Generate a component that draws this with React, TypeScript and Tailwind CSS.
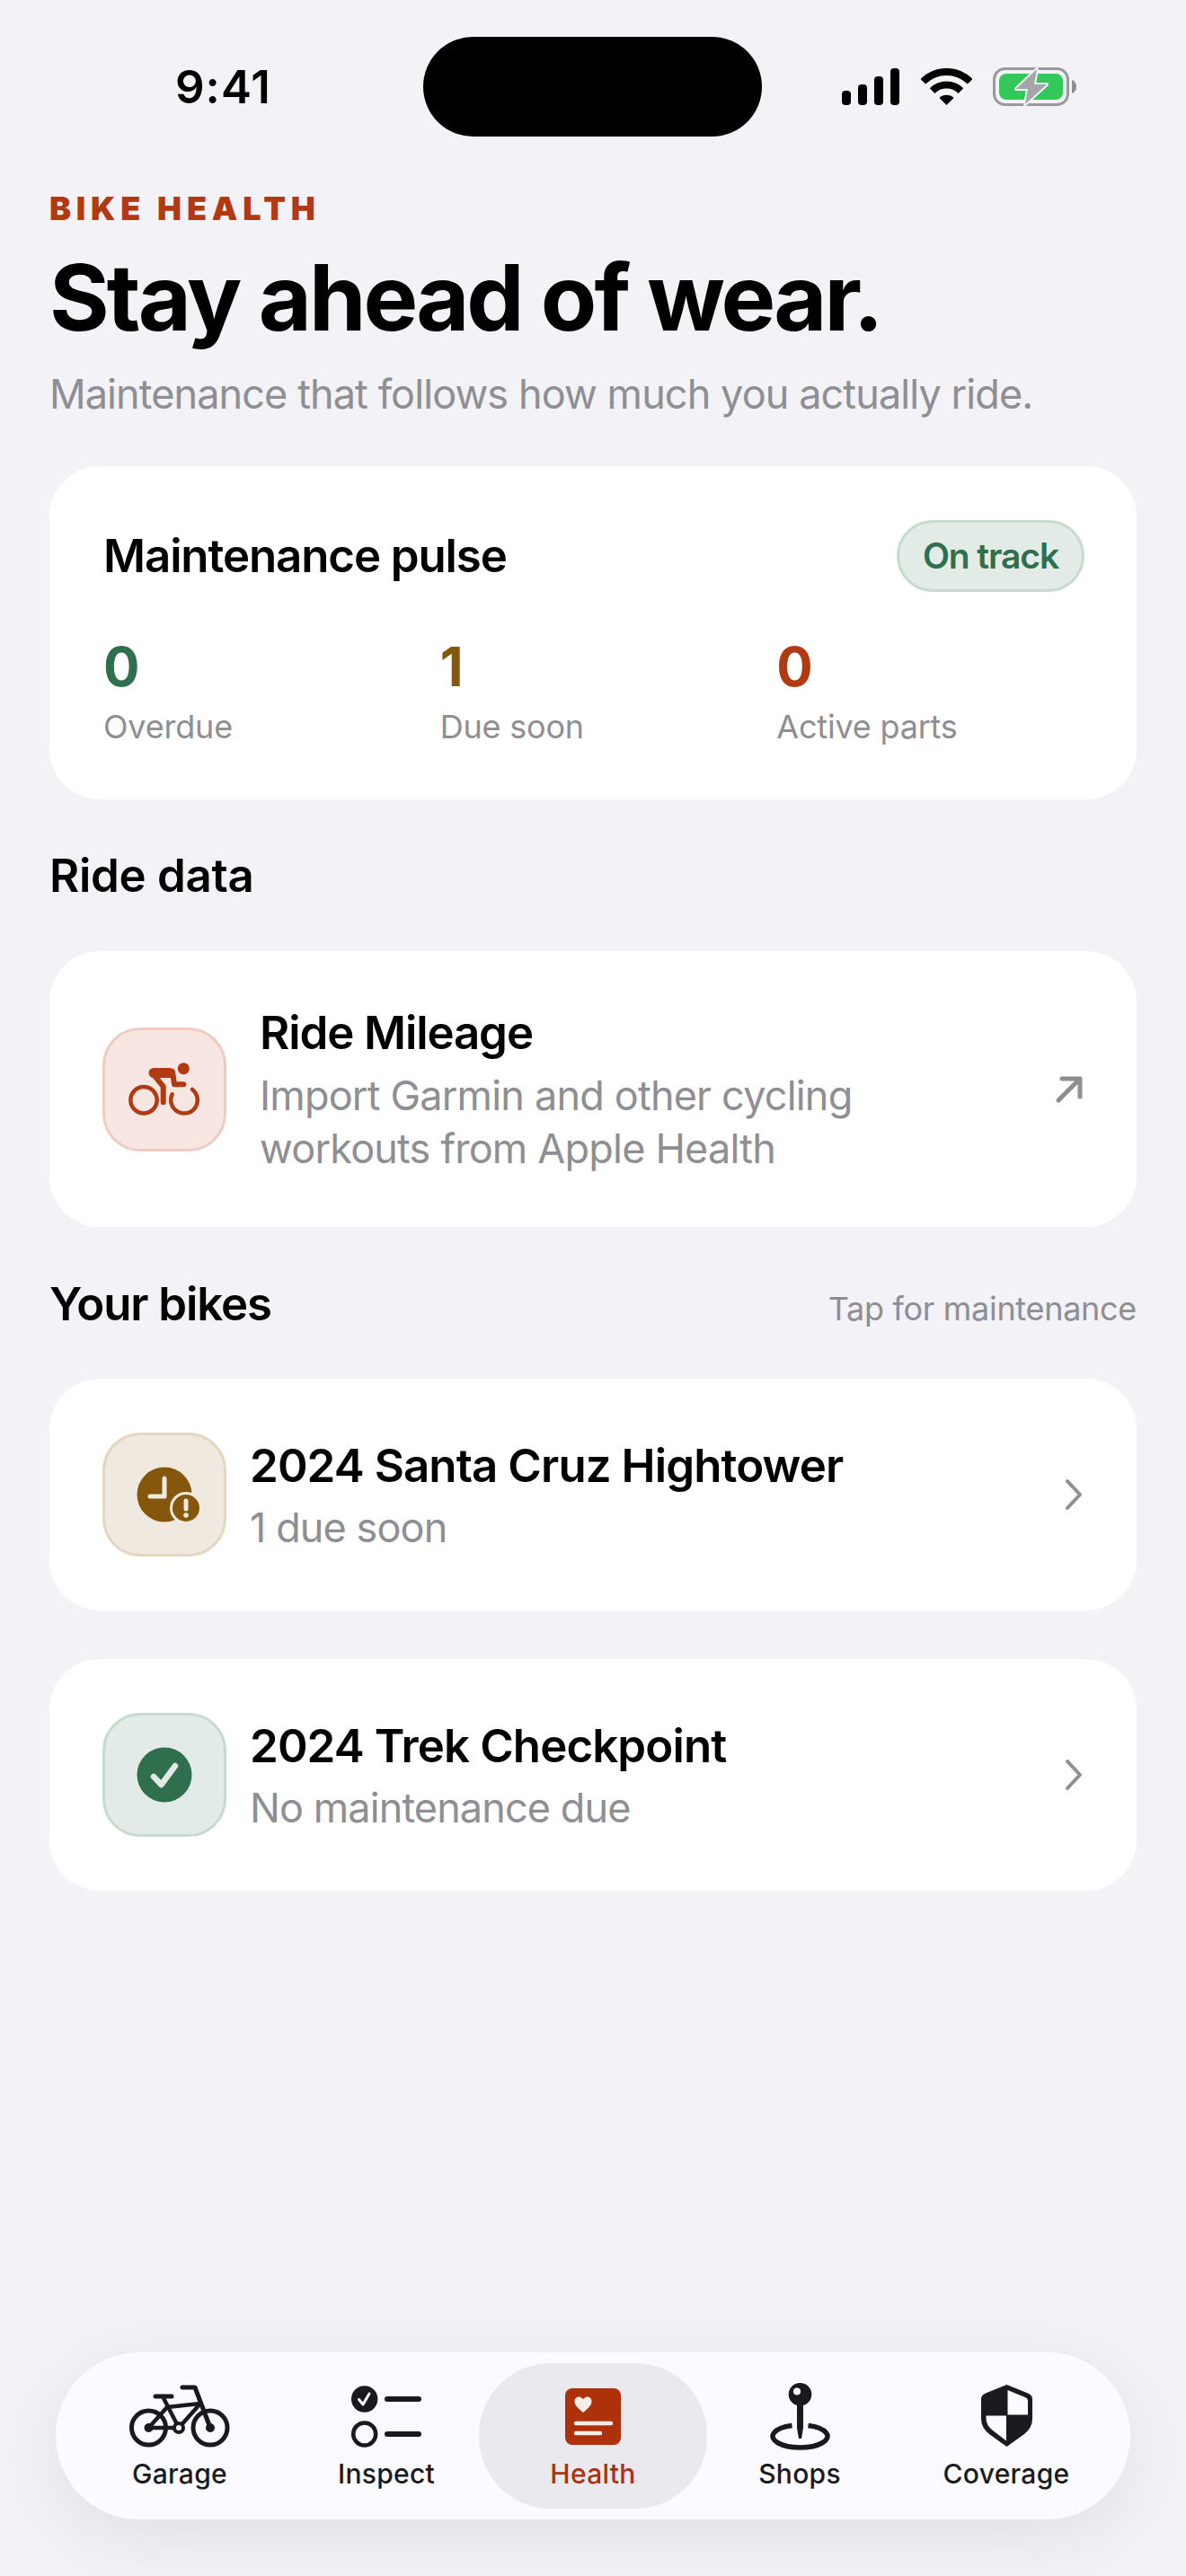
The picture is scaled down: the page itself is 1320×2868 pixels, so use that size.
import React from 'react';

const RED = '#b23a12';
const INK = '#1a1a1e';

const StatusIcons = () => (
  <div className="flex items-center gap-[23px]">
    <svg width="65" height="41" viewBox="0 0 65 41" fill="#000">
      <rect x="0" y="25" width="10" height="16" rx="4" />
      <rect x="18" y="18" width="10" height="23" rx="4" />
      <rect x="36" y="9" width="10" height="32" rx="4" />
      <rect x="54" y="0" width="10" height="41" rx="4" />
    </svg>
    <svg width="57" height="42" viewBox="0 0 57 42" fill="none" stroke="#000" strokeWidth="8">
      <path d="M2.3 14.8A37 37 0 0 1 54.7 14.8" />
      <path d="M12.6 25.1A22.5 22.5 0 0 1 44.4 25.1" />
      <path d="M28.5 41L20.5 33A11.5 11.5 0 0 1 36.5 33Z" fill="#000" stroke="none" />
    </svg>
    <svg width="93" height="43" viewBox="0 0 93 43" fill="none">
      <rect x="1.5" y="1.5" width="82" height="40" rx="12" stroke="#9a9a9d" strokeWidth="3" />
      <rect x="7" y="7" width="71" height="29" rx="8" fill="#34c759" />
      <path d="M88 14c3 1 5 4 5 7.500s-2 6.500-5 7.500Z" fill="#8e8e91" />
      <path
        d="M49 2L26 24H39L36 41L60 19H46Z"
        fill="#a5a5a8"
        stroke="#f2f2f7"
        strokeWidth="4"
        strokeLinejoin="round"
        paintOrder="stroke"
      />
    </svg>
  </div>
);

const Rider = () => (
  <svg width="80" height="60" viewBox="0 0 80 60" fill="none" stroke={RED} strokeLinecap="round" strokeLinejoin="round">
    <circle cx="61.300" cy="6.700" r="6.500" fill={RED} stroke="none" />
    <circle cx="17" cy="41.700" r="14.700" strokeWidth="4.500" />
    <path d="M48.700 35.300A14.800 14.800 0 1 0 71 30" strokeWidth="4.500" />
    <path d="M28 11.500H46" strokeWidth="11" />
    <path d="M49 10L51 24.300H61.300" strokeWidth="6" />
    <path d="M28.700 14.300L38.700 26.700V44.300" strokeWidth="6" />
  </svg>
);

const ClockWarn = () => (
  <svg width="62" height="62" viewBox="0 0 62 62" fill="none" className="overflow-visible">
    <circle cx="31" cy="31" r="30.500" fill="#85570d" />
    <path d="M31 13V33H15" stroke="#f0e9e0" strokeWidth="5" strokeLinecap="round" strokeLinejoin="round" />
    <circle cx="55" cy="46" r="18" fill="#f0e9e0" />
    <circle cx="55" cy="46" r="15" fill="#85570d" />
    <path d="M55 38V47" stroke="#f0e9e0" strokeWidth="5" strokeLinecap="round" />
    <circle cx="55" cy="54" r="2.800" fill="#f0e9e0" />
  </svg>
);

const CheckCircle = () => (
  <svg width="62" height="62" viewBox="0 0 62 62" fill="none">
    <circle cx="31" cy="31" r="30.500" fill="#2f6f4d" />
    <path d="M19 33L27.500 42L43 21" stroke="#e3ebe7" strokeWidth="6.500" strokeLinecap="round" strokeLinejoin="round" />
  </svg>
);

const Chevron = () => (
  <svg width="22" height="36" viewBox="0 0 22 36" fill="none" stroke="#8e8e93" strokeWidth="4" strokeLinecap="round" strokeLinejoin="round">
    <path d="M4 3L18 18L4 33" />
  </svg>
);

const GarageIcon = () => (
  <svg width="112" height="70" viewBox="0 0 112 70" fill="none" stroke={INK} strokeWidth="5" strokeLinecap="round" strokeLinejoin="round">
    <circle cx="21.500" cy="48" r="19" />
    <circle cx="90" cy="48" r="19" />
    <path d="M21.500 48H55L79 21L42 25L21.500 48" strokeWidth="4.500" />
    <path d="M37 13L55 48" strokeWidth="4.500" />
    <path d="M29 13H47" />
    <path d="M59 3H73L90 48" />
    <circle cx="55" cy="48" r="5" fill="#fbfbff" strokeWidth="4" />
    <circle cx="90" cy="48" r="2.500" fill={INK} />
    <circle cx="21.500" cy="48" r="2.500" fill={INK} />
  </svg>
);

const InspectIcon = () => (
  <svg width="78" height="69" viewBox="0 0 78 69" fill="none">
    <circle cx="14.700" cy="15" r="14.700" fill={INK} />
    <path d="M8.500 15.500L13 21L20 9" stroke="#fff" strokeWidth="3" strokeLinecap="round" strokeLinejoin="round" />
    <circle cx="14.700" cy="54" r="12.500" stroke={INK} strokeWidth="4.500" />
    <path d="M40 15H75M40 54H75" stroke={INK} strokeWidth="6" strokeLinecap="round" />
  </svg>
);

const HealthIcon = () => (
  <svg width="62" height="63" viewBox="0 0 62 63" fill="none">
    <rect width="62" height="63" rx="8" fill="#ad320c" />
    <path d="M20 27C14 22 10.500 19 10.500 14.500C10.500 11.500 12.800 9.500 15.300 9.500C17.200 9.500 19 10.500 20 12.500C21 10.500 22.800 9.500 24.700 9.500C27.200 9.500 29.500 11.500 29.500 14.500C29.500 19 26 22 20 27Z" fill="#f7eeea" />
    <path d="M12 39H51M12 50H39" stroke="#f7eeea" strokeWidth="4.500" strokeLinecap="round" />
  </svg>
);

const ShopsIcon = () => (
  <svg width="67" height="75" viewBox="0 0 67 75" fill="none">
    <circle cx="33.500" cy="12.800" r="12.800" fill={INK} />
    <circle cx="30" cy="9.500" r="4" fill="#fbfbff" />
    <path d="M30 22H37V50L35 62H32L30 50Z" fill={INK} />
    <path d="M24.500 47.500A30.500 12.500 0 1 0 42.500 47.500" stroke={INK} strokeWidth="5.500" />
  </svg>
);

const CoverageIcon = () => (
  <svg width="57" height="70" viewBox="0 0 57 70">
    <path d="M28.500 0L52 9.500Q57 11.500 57 16V38Q57 48 48 55L28.500 69L9 55Q0 48 0 38V16Q0 11.500 5 9.500Z" fill={INK} />
    <path d="M29.500 6L50 14.500Q52 15.500 52 18V33.500H29.500Z" fill="#fbfbff" />
    <path d="M5.500 34.500H28V62.500L13 51Q5.500 45.500 5.500 37Z" fill="#fbfbff" />
  </svg>
);

const tabs = [
  { label: 'Garage', icon: <GarageIcon />, active: false },
  { label: 'Inspect', icon: <InspectIcon />, active: false },
  { label: 'Health', icon: <HealthIcon />, active: true },
  { label: 'Shops', icon: <ShopsIcon />, active: false },
  { label: 'Coverage', icon: <CoverageIcon />, active: false },
];

const stats = [
  { value: '0', label: 'Overdue', color: 'text-[#2f6f4d]' },
  { value: '1', label: 'Due soon', color: 'text-[#85570d]' },
  { value: '0', label: 'Active parts', color: 'text-[#b23a12]' },
];

const IconBox = ({ className, children }: { className: string; children: React.ReactNode }) => (
  <div className={`flex h-[138px] w-[138px] shrink-0 items-center justify-center rounded-[42px] border-[3px] ${className}`}>
    {children}
  </div>
);

const BikeRow = ({ name, note, box, icon }: { name: string; note: string; box: string; icon: React.ReactNode }) => (
  <div className="flex h-[258px] items-center rounded-[56px] bg-white pl-[59px] pr-[59px]">
    <IconBox className={box}>{icon}</IconBox>
    <div className="ml-[26px] flex-1">
      <div className="text-[51px] leading-[66px] font-semibold tracking-[-0.9px] text-black">{name}</div>
      <div className="mt-[7px] text-[45px] leading-[58px] tracking-[-0.9px] text-[#8e8e93]">{note}</div>
    </div>
    <Chevron />
  </div>
);

export default function App() {
  return (
    <div className="flex h-[2868px] w-[1320px] flex-col overflow-hidden bg-[#f2f2f7] font-['Inter',sans-serif] text-black">
      <div className="relative flex h-[152px] items-center pt-[41px]">
        <div className="ml-[195px] w-[400px] text-[51px] leading-[60px] font-semibold tracking-[1px]">9:41</div>
        <div className="absolute top-[41px] left-[471px] h-[111px] w-[377px] rounded-[56px] bg-black" />
        <div className="absolute top-[75px] left-[937px]">
          <StatusIcons />
        </div>
      </div>

      <div className="px-[55px]">
        <div className="mt-[58px] text-[36px] leading-[44px] font-black tracking-[5.8px] text-[#b23a12]">BIKE HEALTH</div>
        <h1 className="mt-[15px] text-[102px] leading-[124px] font-bold tracking-[-3px]">Stay ahead of wear.</h1>
        <p className="mt-[17px] text-[45px] leading-[58px] tracking-[-0.9px] text-[#8e8e93]">Maintenance that follows how much you actually ride.</p>

        <section className="mt-[51px] h-[371px] rounded-[56px] bg-white pl-[60px] pr-[58px] pt-[60px]">
          <div className="flex items-center justify-between">
            <h2 className="text-[51px] leading-[64px] font-semibold tracking-[-1.1px]">Maintenance pulse</h2>
            <span className="flex h-[80px] w-[209px] items-center justify-center rounded-full border-[3px] border-[#c6dbd0] bg-[#e3ebe7] text-[39px] font-semibold tracking-[-1.1px] text-[#2f6f4d]">
              On track
            </span>
          </div>
          <div className="mt-[47px] grid grid-cols-3 gap-x-[32px]">
            {stats.map((s) => (
              <div key={s.label}>
                <div className={`text-[60px] leading-[72px] font-bold ${s.color}`}>{s.value}</div>
                <div className="mt-[9px] text-[36px] leading-[44px] tracking-[-0.2px] text-[#8e8e93]">{s.label}</div>
              </div>
            ))}
          </div>
        </section>

        <h2 className="mt-[53px] text-[51px] leading-[64px] font-semibold tracking-[-0.3px]">Ride data</h2>

        <section className="mt-[52px] flex h-[307px] items-center rounded-[56px] bg-white pl-[59px] pr-[60px]">
          <IconBox className="border-[#eeccc3] bg-[#f7e6e2]">
            <Rider />
          </IconBox>
          <div className="ml-[37px] flex-1">
            <div className="text-[51px] leading-[66px] font-semibold tracking-[-1.1px]">Ride Mileage</div>
            <div className="mt-[7px] text-[45px] leading-[59px] tracking-[-0.8px] text-[#8e8e93]">
              Import Garmin and other cycling
              <br />
              workouts from Apple Health
            </div>
          </div>
          <svg width="30" height="30" viewBox="0 0 30 30" fill="none" stroke="#8e8e93" strokeWidth="5" strokeLinecap="round" strokeLinejoin="round">
            <path d="M3 27L27 3M7 3H27V23" />
          </svg>
        </section>

        <div className="mt-[54px] flex items-end justify-between">
          <h2 className="text-[51px] leading-[64px] font-semibold tracking-[-1.1px]">Your bikes</h2>
          <span className="mb-[5px] text-[36px] leading-[44px] tracking-[-0.3px] text-[#8e8e93]">Tap for maintenance</span>
        </div>

        <div className="mt-[51px] flex flex-col gap-[54px]">
          <BikeRow name="2024 Santa Cruz Hightower" note="1 due soon" box="border-[#e3d7c2] bg-[#f0e9e0]" icon={<ClockWarn />} />
          <BikeRow name="2024 Trek Checkpoint" note="No maintenance due" box="border-[#c6dbd0] bg-[#e3ebe7]" icon={<CheckCircle />} />
        </div>
      </div>

      <nav className="mt-auto mb-[63px] ml-[62px] grid h-[186px] w-[1196px] grid-cols-5 rounded-[93px] bg-[#fbfbff] px-[23px] py-[12px] shadow-[0_20px_90px_rgba(0,0,0,0.08)]">
        {tabs.map((t) => (
          <div
            key={t.label}
            className={`flex flex-col items-center rounded-[80px] ${t.active ? '-mx-[12px] bg-[#e9e9ee] text-[#ad320c]' : 'text-[#1a1a1e]'}`}
          >
            <div className="flex h-[84px] items-center pt-[34px]">{t.icon}</div>
            <div className="mt-[21px] text-[30px] leading-[36px] font-medium tracking-[0.01em]">{t.label}</div>
          </div>
        ))}
      </nav>
    </div>
  );
}
